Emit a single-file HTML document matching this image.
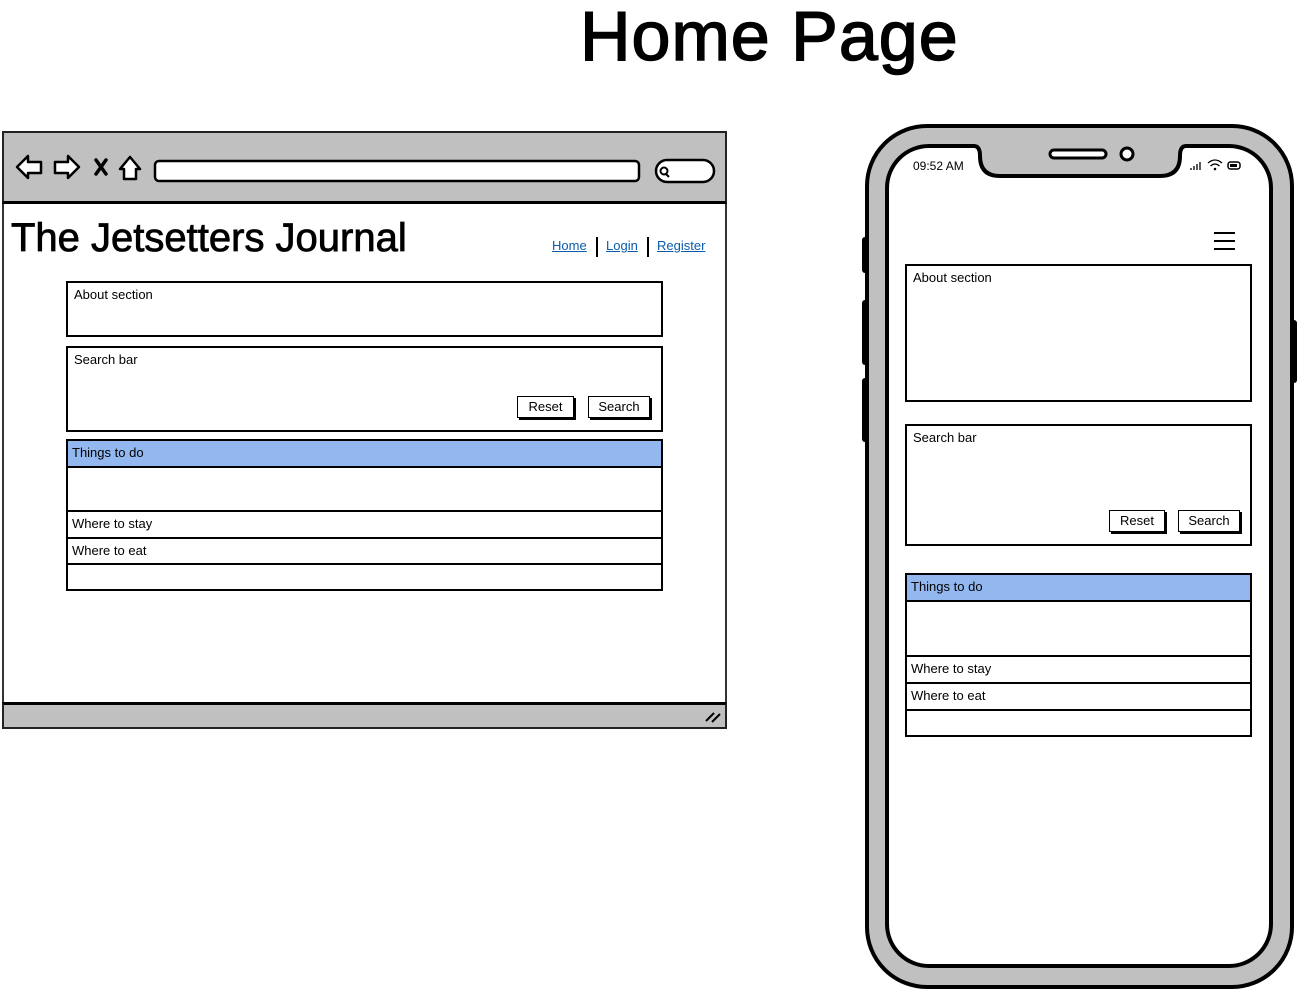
<!DOCTYPE html>
<html><head><meta charset="utf-8"><style>
*{margin:0;padding:0;box-sizing:border-box}
body{width:1297px;height:989px;background:#fff;position:relative;overflow:hidden;font-family:"Liberation Sans",sans-serif;color:#000}
.a{position:absolute}
.box{position:absolute;border:2px solid #000;background:#fff;font-size:13px}
.box span{position:absolute;left:6px;top:4px}
.btn{position:absolute;border:1.5px solid #000;box-shadow:2px 2px 0 #000;background:#fff;font-size:13px;text-align:center;line-height:19px}
.row{position:absolute;left:0;right:0;border-bottom:2px solid #000;font-size:13px;padding-left:4px}
</style></head><body>
<div class="a" style="left:580px;top:-4px;font-size:70px;-webkit-text-stroke:1.5px #000;letter-spacing:1px">Home Page</div>

<!-- browser -->
<div class="a" style="left:2px;top:131px;width:725px;height:598px;border:2px solid #333;background:#fff"></div>
<div class="a" style="left:2px;top:131px;width:725px;height:73px;background:#c0c0c0;border:2px solid #222;border-bottom:3px solid #000"></div>
<div class="a" style="left:2px;top:702px;width:725px;height:27px;background:#c0c0c0;border:2px solid #222;border-top:3px solid #000"></div>
<svg class="a" style="left:0;top:131px" width="730" height="75">
<g fill="#fff" stroke="#000" stroke-width="2.5" stroke-linejoin="round">
<path d="M17 36 L28 25 L28 31 L41 31 L41 42 L28 42 L28 47 Z"/>
<path d="M79 36 L68 25 L68 31 L55 31 L55 42 L68 42 L68 47 Z"/>
<path d="M120 38 L130 26 L140 38 L136 38 L136 48 L124 48 L124 38 Z"/>
<rect x="155" y="30" width="484" height="20" rx="4"/>
<rect x="656" y="29" width="58" height="22" rx="11"/>
</g>
<path d="M96 29 L106 43 M106 29 L96 43" stroke="#000" stroke-width="3.5" stroke-linecap="round"/>
<circle cx="664" cy="40" r="3.5" fill="none" stroke="#000" stroke-width="2"/>
<line x1="666" y1="43" x2="669" y2="46" stroke="#000" stroke-width="2"/>
</svg>
<svg class="a" style="left:704px;top:708px" width="20" height="16"><path d="M2 13 L10 5 M8 14 L16 6" stroke="#000" stroke-width="2"/></svg>
<div class="a" style="left:11px;top:216px;font-size:40px;-webkit-text-stroke:0.8px #000">The Jetsetters Journal</div>
<div class="a" style="left:552px;top:238px;font-size:13px;color:#0b5cad;text-decoration:underline">Home</div>
<div class="a" style="left:596px;top:237px;width:2px;height:20px;background:#000"></div>
<div class="a" style="left:606px;top:238px;font-size:13px;color:#0b5cad;text-decoration:underline">Login</div>
<div class="a" style="left:647px;top:237px;width:2px;height:20px;background:#000"></div>
<div class="a" style="left:657px;top:238px;font-size:13px;color:#0b5cad;text-decoration:underline">Register</div>

<div class="box" style="left:66px;top:281px;width:597px;height:56px"><span>About section</span></div>
<div class="box" style="left:66px;top:346px;width:597px;height:86px"><span>Search bar</span></div>
<div class="btn" style="left:517px;top:396px;width:57px;height:22px">Reset</div>
<div class="btn" style="left:588px;top:396px;width:62px;height:22px">Search</div>
<div class="box" style="left:66px;top:439px;width:597px;height:152px">
<div class="row" style="top:0;height:27px;background:#93b8f0;line-height:24px">Things to do</div>
<div class="row" style="top:27px;height:44px"></div>
<div class="row" style="top:71px;height:27px;line-height:24px">Where to stay</div>
<div class="row" style="top:98px;height:26px;line-height:24px">Where to eat</div>
</div>

<!-- phone -->
<div class="a" style="left:862px;top:237px;width:6px;height:36px;background:#000;border-radius:3px"></div>
<div class="a" style="left:862px;top:300px;width:6px;height:65px;background:#000;border-radius:3px"></div>
<div class="a" style="left:862px;top:378px;width:6px;height:64px;background:#000;border-radius:3px"></div>
<div class="a" style="left:1290px;top:320px;width:7px;height:63px;background:#000;border-radius:3px"></div>
<div class="a" style="left:865px;top:124px;width:429px;height:865px;background:#c0c0c0;border:4px solid #000;border-radius:62px"></div>
<div class="a" style="left:885px;top:144px;width:388px;height:824px;background:#fff;border:4px solid #000;border-radius:44px"></div>
<svg class="a" style="left:960px;top:140px" width="240" height="40">
<path d="M10 0 L10 6 L14 6 Q20 6 20 16 Q20 36 40 36 L200 36 Q220 36 220 16 Q220 6 226 6 L230 6 L230 0 Z" fill="#c0c0c0"/>
<path d="M10 6 L14 6 Q20 6 20 16 Q20 36 40 36 L200 36 Q220 36 220 16 Q220 6 226 6 L230 6" fill="none" stroke="#000" stroke-width="4" stroke-linejoin="round"/>
<rect x="90" y="10" width="56" height="8" rx="4" fill="#fff" stroke="#000" stroke-width="3"/>
<circle cx="167" cy="14" r="6" fill="#fff" stroke="#000" stroke-width="3"/>
</svg>
<div class="a" style="left:913px;top:159px;font-size:12px">09:52 AM</div>
<svg class="a" style="left:1188px;top:157px" width="60" height="16">
<path d="M3 13v-2M6 13v-4M9 13v-6M12 13v-8" stroke="#000" stroke-width="1.3"/>
<path d="M20 6 Q27 0 34 6 M22.5 9 Q27 5 31.5 9" fill="none" stroke="#000" stroke-width="1.3"/><circle cx="27" cy="12" r="1.3"/>
<rect x="40" y="5" width="12" height="7" rx="2.5" fill="none" stroke="#000" stroke-width="1.5"/><rect x="42" y="7" width="7" height="3" fill="#000"/>
</svg>
<div class="a" style="left:1214px;top:232px;width:21px;height:2px;background:#000;box-shadow:0 8px 0 #000,0 16px 0 #000"></div>

<div class="box" style="left:905px;top:264px;width:347px;height:138px"><span>About section</span></div>
<div class="box" style="left:905px;top:424px;width:347px;height:122px"><span>Search bar</span></div>
<div class="btn" style="left:1109px;top:510px;width:56px;height:22px">Reset</div>
<div class="btn" style="left:1178px;top:510px;width:62px;height:22px">Search</div>
<div class="box" style="left:905px;top:573px;width:347px;height:164px">
<div class="row" style="top:0;height:27px;background:#93b8f0;line-height:24px">Things to do</div>
<div class="row" style="top:27px;height:55px"></div>
<div class="row" style="top:82px;height:27px;line-height:24px">Where to stay</div>
<div class="row" style="top:109px;height:27px;line-height:24px">Where to eat</div>
</div>
</body></html>
